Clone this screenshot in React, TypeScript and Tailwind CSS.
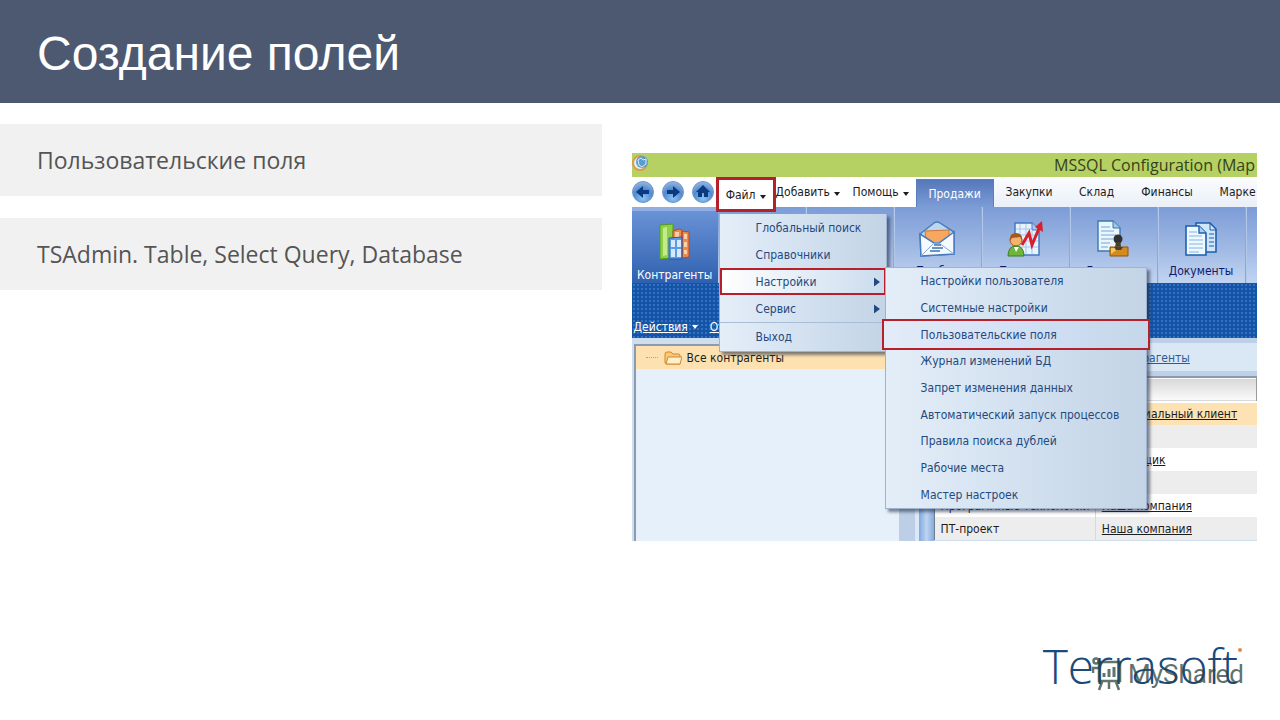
import type { ReactNode } from "react";

const topics = ["Пользовательские поля", "TSAdmin. Table, Select Query, Database"];

const tabs = [
  { name: "Закупки", width: "w-[71px]" },
  { name: "Склад", width: "w-[64px]" },
  { name: "Финансы", width: "w-[77px]" },
  { name: "Марке", width: "w-[50px] pl-3.5 text-left" },
];

const settingsMenu = [
  "Настройки пользователя",
  "Системные настройки",
  "Пользовательские поля",
  "Журнал изменений БД",
  "Запрет изменения данных",
  "Автоматический запуск процессов",
  "Правила поиска дублей",
  "Рабочие места",
  "Мастер настроек",
];

const accounts = [
  { name: "", type: "Потенциальный клиент" },
  { name: "", type: "" },
  { name: "", type: "Поставщик" },
  { name: "", type: "" },
  { name: "Программные технологии", type: "Наша компания" },
  { name: "ПТ-проект", type: "Наша компания" },
];

const menuPanel =
  "absolute z-10 border border-[#9db3cf] bg-linear-to-r from-[#e4eef8] via-[#d3e1f0] to-[#c3d4e6] text-[#234a80] shadow-[3px_3px_3px_rgba(40,50,70,0.6)]";

function Caret({ className = "" }: { className?: string }) {
  return (
    <svg viewBox="0 0 6 4" className={`h-1 w-1.5 shrink-0 ${className}`} fill="currentColor">
      <path d="M0 0h6L3 4z" />
    </svg>
  );
}

function NavButton({ label, children }: { label: string; children: ReactNode }) {
  return (
    <button aria-label={label} className="size-[22px] shrink-0">
      <svg viewBox="0 0 22 22" className="size-full">
        <defs>
          <radialGradient id={`nav-${label}`} cx="50%" cy="80%" r="75%">
            <stop offset="0" stopColor="#8cc4f2" />
            <stop offset="0.6" stopColor="#5189cf" />
            <stop offset="1" stopColor="#8fb2e0" />
          </radialGradient>
        </defs>
        <circle cx="11" cy="11" r="10.5" fill={`url(#nav-${label})`} stroke="#6f97cc" />
        <g fill="#0b3a80">{children}</g>
      </svg>
    </button>
  );
}

function BinderIcon() {
  return (
    <svg viewBox="0 0 32 38" className="h-[38px] w-8">
      <path d="M1 2l13-1v34l-13 1z" fill="#8ed04a" stroke="#4f9a22" />
      <path d="M4 5l4-1v28l-4 1z" fill="#c4ea8c" />
      <path d="M14 8l6-2 3 1v28h-9zM23 8l7 1v25l-7 1z" fill="#f08a4a" stroke="#b6482a" />
      <path d="M16 9h4v5h-4zM25 11h3v5h-3zM25 19h3v5h-3zM25 27h3v4h-3z" fill="#fbd0a4" />
      <path d="M10 15l13-1v22H10z" fill="#5e9be6" stroke="#2459ac" />
      <path d="M12 17h4v7h-4zM18 17h4v7h-4zM12 26h4v8h-4zM18 26h4v8h-4z" fill="#d5e9ff" />
    </svg>
  );
}

function LetterIcon() {
  return (
    <svg viewBox="0 0 36 36" className="size-9">
      <path d="M1 13L15 2q3-2 6 0l14 9v22L2 35z" fill="#b9d6f4" stroke="#4a7cbc" strokeWidth="1.5" />
      <path d="M6 10l24-1v11l-11 5L7 19z" fill="#f6a860" stroke="#cf7631" />
      <path d="M1 13l14 9h5l15-11v22L2 35z" fill="#f4faff" stroke="#4a7cbc" strokeWidth="1.5" />
      <path d="M2 35l13-13h5l15 11" fill="none" stroke="#86aada" />
      <path d="M15 24h7M13 27h11M11 30h10" stroke="#3d72b8" strokeWidth="1.4" />
    </svg>
  );
}

function LeadIcon() {
  return (
    <svg viewBox="0 0 36 36" className="size-9">
      <path d="M8 2h17l7 7v25H8z" fill="#e7f3ff" stroke="#4679bf" strokeWidth="1.5" />
      <path d="M25 2v7h7" fill="#a9cbf0" stroke="#4679bf" />
      <path d="M13 3v30M19 3v30M25 10v23M9 8h15M9 14h22M9 20h22M9 26h22" stroke="#a5c7ea" />
      <path d="M15 24l7-12 3 12 8-19" fill="none" stroke="#d8202c" strokeWidth="3" />
      <path d="M28 6l7-6 1 11z" fill="#d8202c" />
      <circle cx="9" cy="19" r="6" fill="#f7b26a" stroke="#a55b24" />
      <path d="M3 20q-1-8 6-8 7 0 6 8l-2-4-8 1z" fill="#a35a22" />
      <path d="M1 35q0-10 8-10t8 10z" fill="#6fb53c" stroke="#3f7d1f" />
      <path d="M7 26l2 5 3-5z" fill="#fff" />
    </svg>
  );
}

function ContractIcon() {
  return (
    <svg viewBox="0 0 32 38" className="h-[38px] w-8">
      <path d="M1 1h15l7 7v23H1z" fill="#e9f5ff" stroke="#3a78b0" strokeWidth="1.4" />
      <path d="M16 1v7h7" fill="#9cc8ea" stroke="#3a78b0" />
      <path d="M4 7h9M4 11h13M4 15h15M4 19h12M4 23h9M4 27h7" stroke="#7ba7cf" />
      <circle cx="21" cy="19" r="4.5" fill="#30302f" />
      <path d="M19 22h4l1 5 4 1v2H14v-2l4-1z" fill="#454039" />
      <path d="M13 27h18v9H13z" fill="#d58a1d" stroke="#905608" />
      <path d="M14 28h8l-8 6z" fill="#f6c662" />
      <path d="M17 27h9l-2 3h-5z" fill="#454039" />
    </svg>
  );
}

function DocumentsIcon() {
  return (
    <svg viewBox="0 0 34 34" className="size-[34px]">
      <path d="M12 1h14l6 6v23H12z" fill="#cfe6fb" stroke="#1d5fae" strokeWidth="1.6" />
      <path d="M26 1v7h6M25 12h5M25 16h5M25 20h5M25 24h5" fill="none" stroke="#1d5fae" />
      <path d="M2 4h13l7 7v22H2z" fill="#eef8ff" stroke="#1d5fae" strokeWidth="1.6" />
      <path d="M15 4v7h7" fill="#a9d0f3" stroke="#1d5fae" strokeWidth="1.4" />
      <path d="M5 10h8M5 14h13M5 18h14M5 22h14M5 26h14M5 30h10" stroke="#88b4df" />
    </svg>
  );
}

function RibbonItem({ label, children }: { label: string; children?: ReactNode }) {
  return (
    <button className="flex w-[88px] shrink-0 flex-col items-center justify-between border-r border-[#8ba9d8] pt-3 pb-0.5 text-[#121a68] shadow-[1px_0_0_#b4c8ea]">
      <span className="flex h-10 items-center">{children}</span>
      <span className="leading-5">{label}</span>
    </button>
  );
}

function FileMenu() {
  return (
    <ul className={`${menuPanel} top-[37px] left-[3px] w-[168px] border-t-0`}>
      <li>
        <button className="block h-[27px] w-full pl-9 text-left">Глобальный поиск</button>
      </li>
      <li>
        <button className="block h-[27px] w-full pl-9 text-left">Справочники</button>
      </li>
      <li className="relative">
        <button className="flex h-[27px] w-full items-center justify-between border-2 border-[#b5202a] bg-linear-to-r from-white to-[#cbdcee] pr-1 pl-[34px]">
          Настройки
          <Caret className="-rotate-90 scale-150" />
        </button>
        <SettingsMenu />
      </li>
      <li>
        <button className="flex h-[27px] w-full items-center justify-between pr-1.5 pl-9">
          Сервис
          <Caret className="-rotate-90 scale-150" />
        </button>
      </li>
      <li className="border-t border-[#a9bdd6]">
        <button className="block h-7 w-full pl-9 text-left">Выход</button>
      </li>
    </ul>
  );
}

function SettingsMenu() {
  return (
    <ul className={`${menuPanel} -top-px right-[-261px] flex h-[242px] w-[262px] flex-col`}>
      {settingsMenu.map((item) => (
        <li key={item} className="flex min-h-0 flex-1 items-center">
          {item === "Пользовательские поля" ? (
            <button className="-mx-1 h-[31px] w-[268px] shrink-0 border-2 border-[#b5202a] bg-linear-to-r from-[#e4ebf8] via-[#d3e0f5] to-[#c5d7ea] pl-[37px] text-left whitespace-nowrap">
              {item}
            </button>
          ) : (
            <button className="h-full w-full pl-[35px] text-left whitespace-nowrap">{item}</button>
          )}
        </li>
      ))}
    </ul>
  );
}

function MenuBar() {
  return (
    <nav className="flex h-[30px] items-stretch bg-white text-[#1c1c1c]">
      <div className="flex w-[84px] shrink-0 items-center gap-2">
        <NavButton label="back">
          <path d="M4 11l7-6v4h6v4h-6v4z" />
        </NavButton>
        <NavButton label="forward">
          <path d="M18 11l-7-6v4H5v4h6v4z" />
        </NavButton>
        <NavButton label="home">
          <path d="M11 4l7 7h-2v5h-4v-4h-2v4H6v-5H4z" />
        </NavButton>
      </div>
      <div className="relative w-[60px] shrink-0">
        <button className="relative z-20 flex h-[35px] w-full items-center justify-center gap-1 border-[3px] border-[#b5202a] bg-white">
          Файл
          <Caret className="mt-1" />
        </button>
        <FileMenu />
      </div>
      <button className="flex w-[77px] shrink-0 items-center gap-1">
        Добавить
        <Caret className="mt-1" />
      </button>
      <button className="flex w-[63px] shrink-0 items-center gap-1">
        Помощь
        <Caret className="mt-1" />
      </button>
      <button className="mt-0.5 w-[78px] shrink-0 border border-b-0 border-[#5b7fbd] bg-linear-to-b from-[#5578ba] to-[#7c9cd6] text-white">
        Продажи
      </button>
      <div className="flex flex-1 bg-linear-to-b from-[#fbfcfe] to-[#eaeff8]">
        {tabs.map((tab) => (
          <button key={tab.name} className={`${tab.width} shrink-0`}>
            {tab.name}
          </button>
        ))}
      </div>
    </nav>
  );
}

function Ribbon() {
  return (
    <div className="flex h-[76px] bg-linear-to-b from-[#7c9cd6] via-[#9db7e3] to-[#c2d4f1]">
      <button className="flex w-[86px] shrink-0 flex-col items-center justify-between border-t-4 border-[#92aee0] bg-linear-to-b from-[#6a93d6] to-[#2f60af] pt-3 text-white">
        <BinderIcon />
        <span className="leading-4">Контрагенты</span>
      </button>
      <RibbonItem label="" />
      <RibbonItem label="" />
      <RibbonItem label="Подбор">
        <LetterIcon />
      </RibbonItem>
      <RibbonItem label="Продажи">
        <LeadIcon />
      </RibbonItem>
      <RibbonItem label="Договоры">
        <ContractIcon />
      </RibbonItem>
      <RibbonItem label="Документы">
        <DocumentsIcon />
      </RibbonItem>
    </div>
  );
}

function AccountsTable() {
  return (
    <table className="w-full table-fixed border-collapse border-l border-[#6d7d92] bg-white text-[#1c1c1c]">
      <thead>
        <tr className="h-[25px] border-y-2 border-[#8d99a8] border-b-white bg-linear-to-b from-[#d8d8d8] to-[#fafafa]">
          <th aria-label="Название" className="w-1/2 border-r border-[#9a9a9a]" />
          <th aria-label="Тип" className="w-1/2 border-r border-[#9a9a9a]" />
        </tr>
      </thead>
      <tbody>
        {accounts.map((account, index) => (
          <tr
            key={index}
            className={`h-[23px] ${index === 0 ? "bg-[#fde3b4]" : index % 2 ? "bg-[#ededed]" : "bg-white"}`}>
            <td className="overflow-hidden border-r border-[#d9d9d9] pl-1.5 whitespace-nowrap">{account.name}</td>
            <td className="pl-1.5 whitespace-nowrap">
              {account.type && (
                <a href="#" className="underline">
                  {account.type}
                </a>
              )}
            </td>
          </tr>
        ))}
      </tbody>
    </table>
  );
}

function Workspace() {
  return (
    <div className="flex h-[203px] bg-[#cfdeef]">
      <div className="flex w-[267px] shrink-0 flex-col pt-1.5 pl-0.5">
        <div className="flex-1 border-t-2 border-l-2 border-[#8c9bad] bg-[#e6f0fa]">
          <div className="flex h-[23px] items-center bg-[#fde1b0] pl-2.5 text-[#1c1c1c]">
            <span className="w-3 border-t border-dotted border-[#b0a386]" />
            <svg viewBox="0 0 18 14" className="mr-[5px] ml-1.5 h-3.5 w-[18px]">
              <path d="M1 12V3q0-2 2-2h4l2 2h6q1 0 1 2v8H2z" fill="#f8c877" stroke="#d4872a" />
              <path d="M4 6h14l-2 7H2z" fill="#fff0cc" stroke="#d4872a" />
            </svg>
            Все контрагенты
          </div>
        </div>
      </div>
      <div className="flex w-[35px] shrink-0">
        <div className="w-4 bg-[#bccfe6]" />
        <div className="w-1 bg-[#dce8f6]" />
        <div className="flex-1 bg-linear-to-r from-[#7fa9e0] via-[#bdd4f2] to-[#87a9da]" />
      </div>
      <div className="flex min-w-0 flex-1 flex-col">
        <div className="flex h-[38px] shrink-0 items-center border-t-[5px] border-b-[5px] border-[#bdd0e8] bg-[#dae7f5] pt-px pl-[181px]">
          <a href="#" className="text-[#2c5aa0] underline">
            Контрагенты
          </a>
        </div>
        <AccountsTable />
      </div>
    </div>
  );
}

function AppWindow() {
  return (
    <section className="mt-[29px] mr-[23px] ml-[30px] overflow-hidden font-['DejaVu_Sans_Condensed','DejaVu_Sans',sans-serif] text-[12px]">
      <header className="flex h-6 items-center justify-between bg-[#b5d163]">
        <svg viewBox="0 0 18 18" className="-mt-1 size-[18px]">
          <circle cx="8" cy="9" r="7" fill="#e4f0f4" stroke="#e19a45" strokeWidth="2" />
          <circle cx="10" cy="8" r="6" fill="#5b9dcc" />
          <path d="M6 6l3-2 2 2 3-1v5l-4 3-3-2z" fill="none" stroke="#d7f0ff" />
        </svg>
        <div className="pr-0.5 font-['Open_Sans',sans-serif] text-[16px] leading-6 whitespace-nowrap text-[#36421a]">
          MSSQL Configuration (Мар
        </div>
      </header>
      <MenuBar />
      <Ribbon />
      <div className="flex h-[55px] items-end gap-3 bg-[#1553a6] bg-[radial-gradient(#3372c0_1px,transparent_1px)] bg-[length:4px_4px] pb-0.5 pl-0.5 text-white">
        <button className="flex items-center gap-1">
          <span className="underline">Действия</span>
          <Caret />
        </button>
        <button className="underline">Отчеты</button>
      </div>
      <Workspace />
    </section>
  );
}

function Logo() {
  return (
    <footer className="mt-auto flex justify-end pr-[38px] pb-6">
      <div className="relative">
        <span className="flex items-start font-['Open_Sans',sans-serif] text-[48px] leading-[60px] font-light text-[#1a4a7a]">
          Terrasoft
          <span className="mt-3 size-1 rounded-full bg-[#e08a4a]" />
        </span>
        <div className="absolute top-5 -right-0.5 flex items-center gap-1.5 text-[#2b443e]/75">
          <svg viewBox="0 0 30 36" className="h-9 w-[30px]" fill="none" stroke="currentColor" strokeWidth="2.5">
            <path d="M7 6h21v19H7zM10 26l-3 8M17 26v7M24 26l3 8" />
            <path d="M12 21v-4M17 21v-8M22 21v-10" strokeWidth="3" />
            <circle cx="4" cy="5" r="2.5" />
            <path d="M1 17v-5h6" />
          </svg>
          <span className="font-['Roboto',sans-serif] text-[26px] leading-9">MyShared</span>
        </div>
      </div>
    </footer>
  );
}

export default function App() {
  return (
    <div className="flex min-h-screen flex-col bg-white">
      <header className="flex h-[103px] items-center bg-[#4d5970] pt-1 pl-[37px]">
        <h1 className="font-['Liberation_Sans',sans-serif] text-[48px] text-white">Создание полей</h1>
      </header>
      <main className="grid grid-cols-[47%_1fr] pt-[21px]">
        <ul className="flex flex-col gap-[22px]">
          {topics.map((topic) => (
            <li
              key={topic}
              className="flex h-[72px] items-center bg-[#f1f1f1] pl-[37px] font-['Open_Sans',sans-serif] text-[23px] text-[#555]">
              {topic}
            </li>
          ))}
        </ul>
        <AppWindow />
      </main>
      <Logo />
    </div>
  );
}
